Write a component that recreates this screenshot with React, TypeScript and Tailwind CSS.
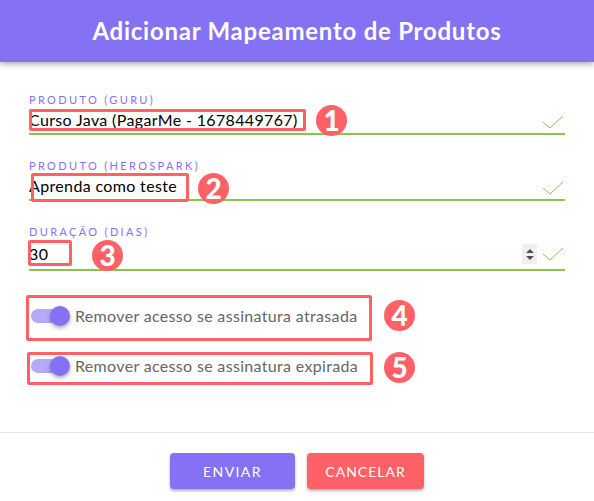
const font = "[font-family:'Lato',sans-serif]";

function Check({ cls }: { cls: string }) {
  return (
    <svg width="22" height="15" viewBox="0 0 22 15" fill="none" className={`shrink-0 mr-[1px] ${cls}`}>
      <path d="M1 7l7 6L21 1" stroke="#8bc34a" strokeWidth="1" />
    </svg>
  );
}

function Field({ label, value, thick, spinner, h, ih }: { label: string; value: string; thick?: boolean; spinner?: boolean; h: string; ih: string }) {
  return (
    <div className={`${h} flex flex-col`}>
      <div className="text-[11px] leading-[14px] tracking-[2.35px] text-[#8571f3] uppercase">{label}</div>
      <div className={`flex items-center justify-between ${ih} border-b-2 border-[#8bc34a]`}>
        <span className="text-[16px] text-black leading-[22px] tracking-[0.35px] whitespace-nowrap">{value}</span>
        <div className="flex items-center gap-[5px]">
          {spinner && (
            <div className="w-[15px] h-[20px] bg-[#f0f0f0] flex flex-col items-center justify-center gap-[3px]">
              <div className="w-0 h-0 border-x-[4px] border-x-transparent border-b-[4px] border-b-[#505050]" />
              <div className="w-0 h-0 border-x-[4px] border-x-transparent border-t-[4px] border-t-[#505050]" />
            </div>
          )}
          <Check cls={spinner ? "mt-0" : "mt-[4px]"} />
        </div>
      </div>
    </div>
  );
}

function Toggle({ label, mt }: { label: string; mt: string }) {
  return (
    <div className={`flex items-center h-[20px] ${mt}`}>
      <div className="relative w-[38px] h-[14px] rounded-full bg-[#b6aaf8] ml-[2px]">
        <div className="absolute right-[-1px] top-[-3px] w-[20px] h-[20px] rounded-full bg-[#8571f3] shadow-[0_2px_4px_rgba(0,0,0,0.35)]" />
      </div>
      <span className="ml-[6px] text-[16px] leading-[20px] tracking-[0.33px] text-[#666] whitespace-nowrap">{label}</span>
    </div>
  );
}

function Box({ cls }: { cls: string }) {
  return <div className={`absolute border-[3px] border-[#ff6166] rounded-[2px] ${cls}`} />;
}

function Badge({ n, cls }: { n: string; cls: string }) {
  return (
    <div className={`absolute w-[31px] h-[31px] rounded-full bg-[#ff6166] text-white font-black text-[28px] leading-[30px] text-center ${cls}`}>
      {n}
    </div>
  );
}

export default function App() {
  return (
    <div className={`relative w-[594px] h-[501px] bg-white overflow-hidden flex flex-col ${font}`}>
      <header className="h-[62px] shrink-0 bg-[#8571f3] flex items-center justify-center shadow-[0_2px_6px_rgba(0,0,0,0.35)]">
        <h1 className="text-[24px] font-bold text-white tracking-[0.75px]">Adicionar Mapeamento de Produtos</h1>
      </header>

      <main className="flex-1 pl-[29px] pr-[29px] pt-[31px] flex flex-col">
        <Field h="h-[66px]" ih="h-[28px]" label="Produto (Guru)" value="Curso Java (PagarMe - 1678449767)" />
        <Field h="h-[66px]" ih="h-[28px]" label="Produto (HeroSpark)" value="Aprenda como teste" />
        <Field h="h-[46px]" ih="h-[32px]" label="Duração (dias)" value="30" thick spinner />
        <Toggle mt="mt-[35px]" label="Remover acesso se assinatura atrasada" />
        <Toggle mt="mt-[30px]" label="Remover acesso se assinatura expirada" />
      </main>

      <footer className="h-[69px] shrink-0 border-t border-[#e2e2e2] flex justify-center items-start pt-[20px] gap-[12px]">
        <button className="w-[125px] h-[36px] rounded-[4px] bg-[#8571f3] text-white text-[14px] tracking-[1.4px] shadow-[0_2px_3px_rgba(0,0,0,0.3)]">ENVIAR</button>
        <button className="w-[117px] h-[36px] rounded-[4px] bg-[#ff6166] text-white text-[14px] tracking-[1px] shadow-[0_2px_3px_rgba(0,0,0,0.3)]">CANCELAR</button>
      </footer>

      <Box cls="left-[29px] top-[109px] w-[277px] h-[22px]" />
      <Box cls="left-[31px] top-[173px] w-[158px] h-[29px]" />
      <Box cls="left-[28px] top-[240px] w-[44px] h-[26px]" />
      <Box cls="left-[26px] top-[295px] w-[346px] h-[46px]" />
      <Box cls="left-[27px] top-[352px] w-[346px] h-[33px]" />
      <Badge n="1" cls="left-[316px] top-[105px]" />
      <Badge n="2" cls="left-[198px] top-[173px]" />
      <Badge n="3" cls="left-[92px] top-[240px]" />
      <Badge n="4" cls="left-[384px] top-[300px]" />
      <Badge n="5" cls="left-[384px] top-[352px]" />
    </div>
  );
}
